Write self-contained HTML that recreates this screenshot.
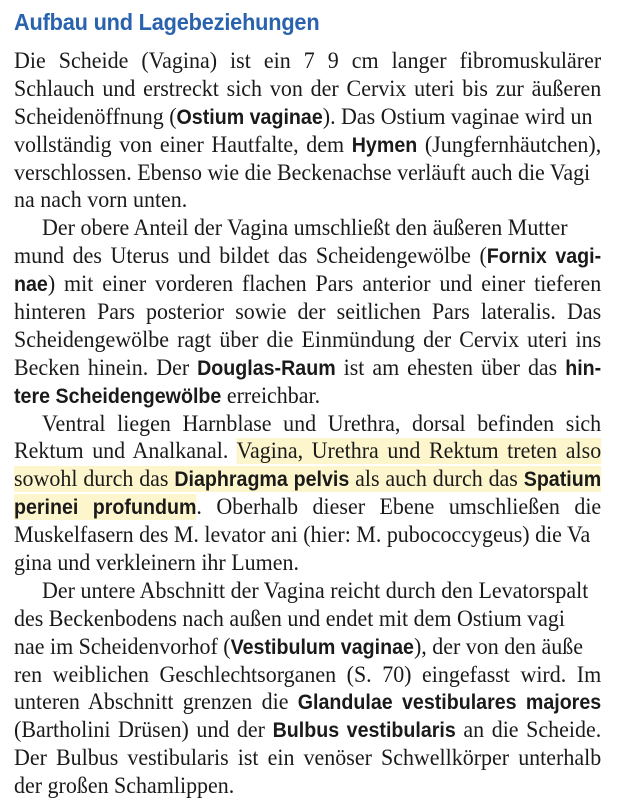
<!DOCTYPE html>
<html><head><meta charset="utf-8"><style>
html,body{margin:0;padding:0;background:#fff;width:620px;height:810px;overflow:hidden}
h1{position:absolute;left:14px;top:7px;margin:0;font:bold 23px/30px "Liberation Sans",sans-serif;color:#2a63ad;transform:scaleX(0.945);transform-origin:left;letter-spacing:-0.2px}
#t{position:absolute;left:14px;top:48px;width:628px;transform:scaleX(0.935);transform-origin:left top;font:23.5px/27.9px "Liberation Serif",serif;color:#1a1a1a}
#t div{white-space:nowrap;height:27.9px}
#t div.j{text-align:justify;text-align-last:justify;white-space:normal;overflow:hidden}
.i{padding-left:30px}
b{font-family:"Liberation Sans",sans-serif;font-size:21px;font-weight:bold}
.h{background:#fdf6cd}
</style></head><body>
<h1>Aufbau und Lagebeziehungen</h1>
<div id="t">
<div class="j">Die Scheide (Vagina) ist ein 7 9 cm langer fibromuskulärer</div>
<div class="j">Schlauch und erstreckt sich von der Cervix uteri bis zur äußeren</div>
<div>Scheidenöffnung (<b>Ostium vaginae</b>). Das Ostium vaginae wird un</div>
<div class="j">vollständig von einer Hautfalte, dem <b>Hymen</b> (Jungfernhäutchen),</div>
<div>verschlossen. Ebenso wie die Beckenachse verläuft auch die Vagi</div>
<div>na nach vorn unten.</div>
<div class="i">Der obere Anteil der Vagina umschließt den äußeren Mutter</div>
<div class="j">mund des Uterus und bildet das Scheidengewölbe (<b>Fornix vagi-</b></div>
<div class="j"><b>nae</b>) mit einer vorderen flachen Pars anterior und einer tieferen</div>
<div class="j">hinteren Pars posterior sowie der seitlichen Pars lateralis. Das</div>
<div class="j">Scheidengewölbe ragt über die Einmündung der Cervix uteri ins</div>
<div class="j">Becken hinein. Der <b>Douglas-Raum</b> ist am ehesten über das <b>hin-</b></div>
<div><b>tere Scheidengewölbe</b> erreichbar.</div>
<div class="j i">Ventral liegen Harnblase und Urethra, dorsal befinden sich</div>
<div class="j">Rektum und Analkanal. <span class="h">Vagina, Urethra und Rektum treten also</span></div>
<div class="j"><span class="h">sowohl durch das <b>Diaphragma pelvis</b> als auch durch das <b>Spatium</b></span></div>
<div class="j"><span class="h"><b>perinei profundum</b></span>. Oberhalb dieser Ebene umschließen die</div>
<div>Muskelfasern des M. levator ani (hier: M. pubococcygeus) die Va</div>
<div>gina und verkleinern ihr Lumen.</div>
<div class="i">Der untere Abschnitt der Vagina reicht durch den Levatorspalt</div>
<div>des Beckenbodens nach außen und endet mit dem Ostium vagi</div>
<div>nae im Scheidenvorhof (<b>Vestibulum vaginae</b>), der von den äuße</div>
<div class="j">ren weiblichen Geschlechtsorganen (S. 70) eingefasst wird. Im</div>
<div class="j">unteren Abschnitt grenzen die <b>Glandulae vestibulares majores</b></div>
<div class="j">(Bartholini Drüsen) und der <b>Bulbus vestibularis</b> an die Scheide.</div>
<div class="j">Der Bulbus vestibularis ist ein venöser Schwellkörper unterhalb</div>
<div>der großen Schamlippen.</div>
</div>
</body></html>
